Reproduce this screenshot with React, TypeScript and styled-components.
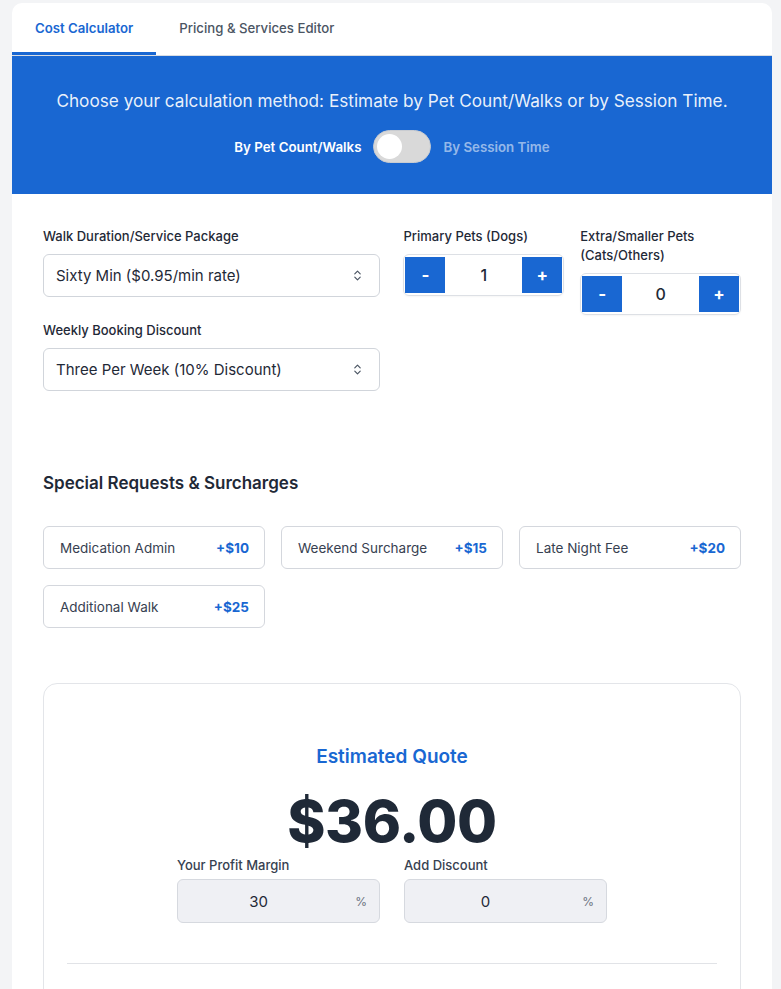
import { useState } from "react";
import styled, { createGlobalStyle } from "styled-components";
import { ChevronsUpDown } from "lucide-react";

const GlobalStyle = createGlobalStyle`
  * { box-sizing: border-box; }
  body {
    margin: 0;
    background: #f3f4f6;
    font-family: Inter, "Noto Sans", Arial, sans-serif;
    color: #1f2937;
  }
`;

const BLUE = "#1967d2";

const Page = styled.div`
  padding: 3px 9px 0 12px;
`;

const Card = styled.div`
  background: #fff;
  border-radius: 10px 10px 0 0;
  overflow: hidden;
`;

const TabBar = styled.div`
  display: flex;
  height: 53px;
  border-bottom: 1px solid #d9dde3;
`;

const Tab = styled.button<{ $active?: boolean }>`
  border: none;
  background: none;
  padding: 0 23px;
  font-family: inherit;
  font-size: 13.2px;
  font-weight: ${(p) => (p.$active ? 600 : 500)};
  color: ${(p) => (p.$active ? BLUE : "#4b5563")};
  border-bottom: 3px solid ${(p) => (p.$active ? BLUE : "transparent")};
  cursor: pointer;
`;

const Banner = styled.div`
  background: ${BLUE};
  padding: 32px 20px 31px;
  text-align: center;
`;

const BannerText = styled.p`
  margin: 0;
  font-size: 17.2px;
  line-height: 25px;
  color: rgba(255, 255, 255, 0.92);
`;

const ToggleRow = styled.div`
  margin-top: 17px;
  display: flex;
  align-items: center;
  justify-content: center;
  gap: 12px;
`;

const ToggleLabel = styled.span<{ $on?: boolean }>`
  font-size: 13.3px;
  font-weight: 600;
  color: ${(p) => (p.$on ? "#fff" : "rgba(255,255,255,0.55)")};
`;

const Switch = styled.button<{ $on: boolean }>`
  position: relative;
  width: 58px;
  height: 33px;
  border-radius: 17px;
  border: 1px solid #c9ccd1;
  background: #d9d9d9;
  padding: 0;
  cursor: pointer;
  &::after {
    content: "";
    position: absolute;
    top: 3px;
    left: ${(p) => (p.$on ? "28px" : "3px")};
    width: 25px;
    height: 25px;
    border-radius: 50%;
    background: #fff;
  }
`;

const Body = styled.div`
  padding: 33px 31px 0 31px;
`;

const FormRow = styled.div`
  display: flex;
  align-items: flex-start;
`;

const LeftCol = styled.div`
  width: 338px;
  display: flex;
  flex-direction: column;
  gap: 24px;
`;

const Field = styled.div<{ $w?: number; $ml?: number }>`
  width: ${(p) => (p.$w ? `${p.$w}px` : "auto")};
  margin-left: ${(p) => p.$ml ?? 0}px;
`;

const Label = styled.label`
  display: block;
  font-size: 13px;
  font-weight: 500;
  line-height: 19px;
  color: #1f2937;
  margin-bottom: 8px;
`;

const Select = styled.div`
  height: 43px;
  border: 1px solid #d1d5db;
  border-radius: 6px;
  display: flex;
  align-items: center;
  justify-content: space-between;
  padding: 0 15px 0 12px;
  font-size: 15px;
  color: #1f2937;
  svg {
    color: #4b5563;
  }
`;

const Stepper = styled.div`
  height: 42px;
  border: 1px solid #dde0e5;
  border-radius: 6px;
  padding: 2px 1px;
  display: flex;
  align-items: stretch;
  box-shadow: 0 1px 2px rgba(0, 0, 0, 0.04);
`;

const StepButton = styled.button`
  width: 40px;
  border: none;
  background: ${BLUE};
  color: #fff;
  font-size: 17px;
  font-weight: 700;
  font-family: inherit;
  cursor: pointer;
`;

const StepValue = styled.div`
  flex: 1;
  display: flex;
  align-items: center;
  justify-content: center;
  font-size: 16px;
  font-weight: 500;
`;

const SectionTitle = styled.h2`
  margin: 80px 0 31px;
  font-size: 17px;
  line-height: 24px;
  font-weight: 600;
  color: #1f2937;
`;

const ChipGrid = styled.div`
  display: grid;
  grid-template-columns: repeat(3, 222px);
  gap: 16px;
`;

const Chip = styled.button`
  height: 43px;
  border: 1px solid #d4d7dd;
  border-radius: 6px;
  background: #fff;
  display: flex;
  align-items: center;
  justify-content: space-between;
  padding: 0 15px 0 16px;
  font-family: inherit;
  font-size: 13.5px;
  color: #374151;
  cursor: pointer;
`;

const Price = styled.span`
  color: ${BLUE};
  font-weight: 700;
`;

const QuoteCard = styled.div`
  margin-top: 55px;
  border: 1px solid #e3e5e9;
  border-radius: 14px;
  padding: 59px 23px 26px;
  text-align: center;
`;

const QuoteTitle = styled.h3`
  margin: 0;
  font-size: 19px;
  line-height: 28px;
  font-weight: 600;
  color: ${BLUE};
`;

const Amount = styled.div`
  margin-top: 21px;
  font-size: 58px;
  line-height: 58px;
  font-weight: 800;
  letter-spacing: -0.4px;
  color: #1f2937;
`;

const AdjustRow = styled.div`
  margin-top: 6px;
  display: flex;
  justify-content: center;
  gap: 24px;
  text-align: left;
`;

const AdjustField = styled.div`
  width: 203px;
`;

const SmallLabel = styled.div`
  font-size: 13px;
  font-weight: 500;
  line-height: 18px;
  color: #374151;
  margin-bottom: 5px;
`;

const PercentBox = styled.div`
  height: 44px;
  background: #eff0f4;
  border: 1px solid #d6d9df;
  border-radius: 6px;
  display: flex;
  align-items: center;
  padding-right: 12px;
`;

const PercentValue = styled.span`
  flex: 1;
  text-align: center;
  padding-right: 16px;
  font-size: 15px;
  color: #1f2937;
`;

const PercentSign = styled.span`
  font-size: 12px;
  color: #6b7280;
`;

const Divider = styled.hr`
  margin: 40px 0 0;
  border: none;
  border-top: 1px solid #e1e3e7;
`;

const Spacer = styled.div`
  height: 60px;
`;

const surcharges = [
  { name: "Medication Admin", price: 10 },
  { name: "Weekend Surcharge", price: 15 },
  { name: "Late Night Fee", price: 20 },
  { name: "Additional Walk", price: 25 },
];

export default function App() {
  const [bySession, setBySession] = useState(false);
  const [dogs, setDogs] = useState(1);
  const [others, setOthers] = useState(0);

  return (
    <Page>
      <GlobalStyle />
      <Card>
        <TabBar>
          <Tab $active>Cost Calculator</Tab>
          <Tab>Pricing &amp; Services Editor</Tab>
        </TabBar>
        <Banner>
          <BannerText>
            Choose your calculation method: Estimate by Pet Count/Walks or by Session Time.
          </BannerText>
          <ToggleRow>
            <ToggleLabel $on={!bySession}>By Pet Count/Walks</ToggleLabel>
            <Switch $on={bySession} onClick={() => setBySession(!bySession)} />
            <ToggleLabel $on={bySession}>By Session Time</ToggleLabel>
          </ToggleRow>
        </Banner>
        <Body>
          <FormRow>
            <LeftCol>
              <Field>
                <Label>Walk Duration/Service Package</Label>
                <Select>
                  Sixty Min ($0.95/min rate)
                  <ChevronsUpDown size={13} strokeWidth={2.2} />
                </Select>
              </Field>
              <Field>
                <Label>Weekly Booking Discount</Label>
                <Select>
                  Three Per Week (10% Discount)
                  <ChevronsUpDown size={13} strokeWidth={2.2} />
                </Select>
              </Field>
            </LeftCol>
            <Field $w={161} $ml={23}>
              <Label>Primary Pets (Dogs)</Label>
              <Stepper>
                <StepButton onClick={() => setDogs(Math.max(0, dogs - 1))}>-</StepButton>
                <StepValue>{dogs}</StepValue>
                <StepButton onClick={() => setDogs(dogs + 1)}>+</StepButton>
              </Stepper>
            </Field>
            <Field $w={161} $ml={16}>
              <Label>
                Extra/Smaller Pets
                <br />
                (Cats/Others)
              </Label>
              <Stepper>
                <StepButton onClick={() => setOthers(Math.max(0, others - 1))}>-</StepButton>
                <StepValue>{others}</StepValue>
                <StepButton onClick={() => setOthers(others + 1)}>+</StepButton>
              </Stepper>
            </Field>
          </FormRow>

          <SectionTitle>Special Requests &amp; Surcharges</SectionTitle>
          <ChipGrid>
            {surcharges.map((s) => (
              <Chip key={s.name}>
                {s.name}
                <Price>+${s.price}</Price>
              </Chip>
            ))}
          </ChipGrid>

          <QuoteCard>
            <QuoteTitle>Estimated Quote</QuoteTitle>
            <Amount>$36.00</Amount>
            <AdjustRow>
              <AdjustField>
                <SmallLabel>Your Profit Margin</SmallLabel>
                <PercentBox>
                  <PercentValue>30</PercentValue>
                  <PercentSign>%</PercentSign>
                </PercentBox>
              </AdjustField>
              <AdjustField>
                <SmallLabel>Add Discount</SmallLabel>
                <PercentBox>
                  <PercentValue>0</PercentValue>
                  <PercentSign>%</PercentSign>
                </PercentBox>
              </AdjustField>
            </AdjustRow>
            <Divider />
            <Spacer />
          </QuoteCard>
        </Body>
      </Card>
    </Page>
  );
}
